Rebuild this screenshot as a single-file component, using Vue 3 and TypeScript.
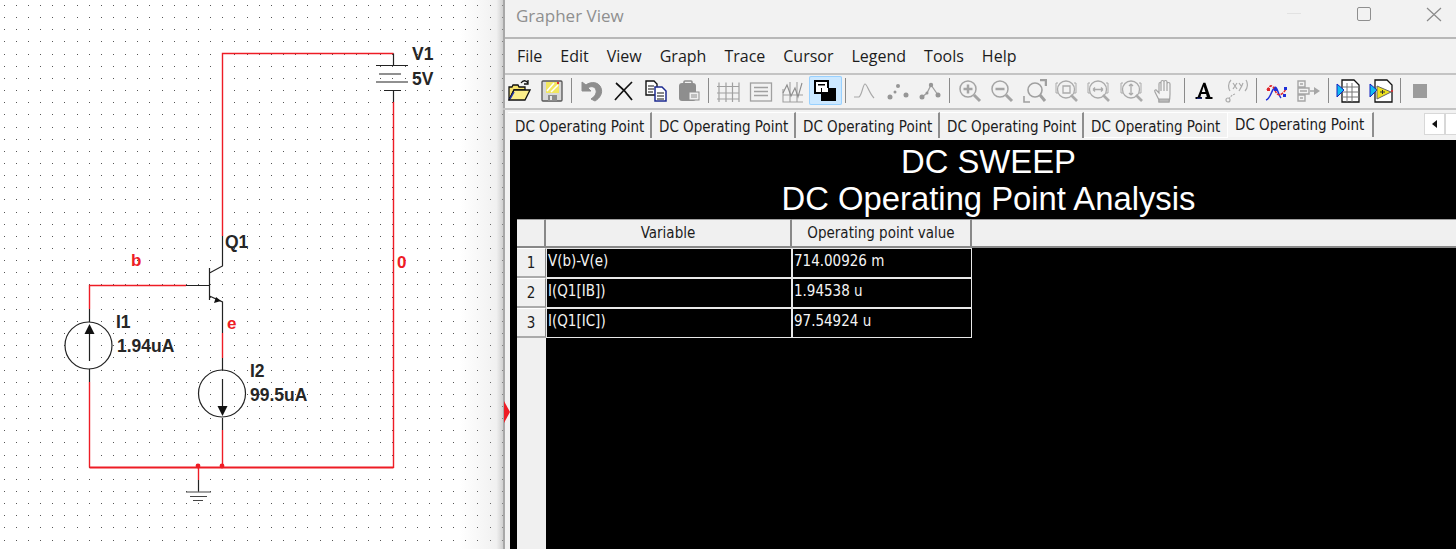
<script setup lang="ts">
const menus = ['File', 'Edit', 'View', 'Graph', 'Trace', 'Cursor', 'Legend', 'Tools', 'Help']
const tabs = Array.from({ length: 5 }, () => 'DC Operating Point')

interface Row {
  id: number
  name: string
  value: string
}

const rows: Row[] = [
  { id: 1, name: 'V(b)-V(e)', value: '714.00926 m' },
  { id: 2, name: 'I(Q1[IB])', value: '1.94538 u' },
  { id: 3, name: 'I(Q1[IC])', value: '97.54924 u' }
]

// the sheet's dot grid
let dotPath = ''
for (let i = 0; i < 45; i++) {
  for (let j = 0; j < 42; j++) {
    const x = Math.round(3.6 + 12.15 * j)
    const y = Math.round(5 + 12.15 * i)
    dotPath += `M${x} ${y}h1v1h-1z`
  }
}
</script>

<template>
  <div class="page">
    <!-- schematic sheet -->
    <div class="sheet">
      <svg class="circuit" width="503" height="549" viewBox="0 0 503 549">
        <path :d="dotPath" fill="#555" />
        <g fill="none" stroke="#ee1c25" stroke-width="1.4">
          <path d="M222.5 236V53.5H393.5" />
          <path d="M393.5 102V468" />
          <path d="M186 285.5H89.5V309" />
          <path d="M89.5 382V467.5" />
          <path d="M222.5 333V358" />
          <path d="M222.5 430V467.5" />
          <path d="M198.5 468V480" />
          <path d="M89.5 467.5H393.5" stroke-width="2" />
        </g>
        <circle cx="198" cy="466" r="2.4" fill="#ee1c25" />
        <circle cx="222" cy="466" r="2.4" fill="#ee1c25" />

        <g fill="none" stroke="#222" stroke-width="1.2">
          <path d="M393.5 53.5V65.5M376 65.5H408M379 74H401M376 82H408M384 90.5H401M393.5 90.5V102" />
          <path d="M222.5 236V266L209.5 273M209.5 268V300M186 285.5H209.5M209.5 296L222.5 302V333" />
          <path d="M222.5 358V370M222.5 418V430" />
          <path d="M89.5 309V322M89.5 369V382M89.5 361V333" />
          <path d="M222.5 379V408" />
          <path d="M198.5 480V491" />
          <circle cx="88.5" cy="345.5" r="23.5" />
          <circle cx="222" cy="393.5" r="23.5" />
          <path d="M186 492H211M190 496.5H207M193 500.5H203" stroke="#444" />
        </g>
        <path d="M89.5 324L94.5 334H84.5Z" fill="#111" />
        <path d="M222.5 416L217.5 406H227.5Z" fill="#111" />
        <path d="M221 301L214 303L216 297Z" fill="#111" />

        <g class="label">
          <text x="412" y="60">V1</text>
          <text x="412" y="85">5V</text>
          <text x="225" y="248">Q1</text>
          <text x="116" y="328">I1</text>
          <text x="117" y="352">1.94uA</text>
          <text x="250" y="377">I2</text>
          <text x="250" y="401">99.5uA</text>
        </g>
        <g class="label red">
          <text x="131" y="266">b</text>
          <text x="397" y="268">0</text>
          <text x="227" y="329">e</text>
        </g>
      </svg>
      <div class="shade"></div>
    </div>

    <!-- grapher window -->
    <div class="grapher">
      <div class="titlebar">
        <span class="title">Grapher View</span>
        <span class="min"></span>
        <span class="max"></span>
        <svg class="close" width="16" height="15" viewBox="0 0 16 15">
          <path d="M1 1L15 14M15 1L1 14" stroke="#8a8a8a" stroke-width="1.2" fill="none" />
        </svg>
      </div>

      <div class="menubar">
        <span v-for="m in menus" :key="m">{{ m }}</span>
      </div>

      <div class="toolbar">
        <button class="tool">
          <svg viewBox="0 0 24 24">
            <path d="M2 21V8H5L6 6H11L12 8H18V11H7L2 21Z" fill="#f7e36b" stroke="#111" stroke-width="1.3" />
            <path d="M2 21L7 11H23L18 21Z" fill="#fbee8a" stroke="#111" stroke-width="1.3" />
            <path d="M3 20L7 13" stroke="#2438b0" stroke-width="1.5" />
            <path d="M14 4C16 1 19 1 21 4M21 1V5H17" fill="none" stroke="#111" stroke-width="1.3" />
          </svg>
        </button>
        <button class="tool">
          <svg viewBox="0 0 24 24">
            <rect x="2" y="2" width="20" height="20" rx="1" fill="#d8d8d8" stroke="#555" stroke-width="1.3" />
            <rect x="6" y="3" width="13" height="11" fill="#f2e75f" />
            <path d="M7 12L14 4M11 13L18 6" stroke="#fff" stroke-width="1.5" />
            <rect x="17" y="3" width="2" height="2" fill="#e03030" />
            <rect x="8" y="16" width="9" height="6" fill="#8c8c8c" />
            <rect x="10" y="17" width="2" height="4" fill="#e8e8e8" />
          </svg>
        </button>
        <i class="sep"></i>
        <button class="tool">
          <svg viewBox="0 0 24 24">
            <path d="M3 3V12H12L9 9C11 7 16 7 17 11C18 15 15 18 12 20L16 22C21 19 24 14 22 9C20 3 12 2 7 6L3 3Z" fill="#8e8e8e" stroke="#8e8e8e" />
          </svg>
        </button>
        <button class="tool">
          <svg viewBox="0 0 24 24">
            <path d="M4 4C9 8 15 14 20 21M20 3C15 8 9 14 3 21" fill="none" stroke="#111" stroke-width="1.7" />
          </svg>
        </button>
        <button class="tool">
          <svg viewBox="0 0 24 24">
            <path d="M2 2H10L13 5V16H2Z" fill="#fff" stroke="#111" stroke-width="1.4" />
            <path d="M4 7H10M4 10H10M4 13H9" stroke="#111" />
            <path d="M11 8H18L22 12V22H11Z" fill="#fff" stroke="#1c2a90" stroke-width="1.5" />
            <path d="M13 14H20M13 17H20M13 20H20" stroke="#111" />
          </svg>
        </button>
        <button class="tool">
          <svg viewBox="0 0 24 24">
            <rect x="2" y="4" width="17" height="18" rx="3" fill="#8e8e8e" />
            <rect x="7" y="2" width="8" height="5" rx="1" fill="none" stroke="#8e8e8e" stroke-width="1.6" />
            <rect x="12" y="13" width="10" height="8" fill="#efefef" stroke="#8e8e8e" />
            <path d="M14 16H20M14 18H20" stroke="#8e8e8e" />
          </svg>
        </button>
        <i class="sep"></i>
        <button class="tool">
          <svg viewBox="0 0 24 24" fill="none" stroke="#a0a0a0" stroke-width="1.2">
            <path d="M3 3.5V23M10 3.5V23M16.5 3.5V23M23 3.5V23M1 7.5H23M1 14H23M1 20H23" />
          </svg>
        </button>
        <button class="tool">
          <svg viewBox="0 0 24 24" fill="none" stroke="#a0a0a0" stroke-width="1.3">
            <rect x="1.5" y="4" width="21" height="18" />
            <path d="M5 8.5H19M5 12.5H19M5 16.5H19" />
          </svg>
        </button>
        <button class="tool">
          <svg viewBox="0 0 24 24" fill="none" stroke="#a0a0a0" stroke-width="1.1">
            <path d="M2 10V23H22M9 3V23M16 3V23M2 16H22" />
            <path d="M2 14L6 6L10 17L14 9L17 18L21 4" stroke="#8c8c8c" />
          </svg>
        </button>
        <button class="tool active">
          <svg viewBox="0 0 24 24">
            <rect x="2" y="2" width="13" height="12" fill="#fff" stroke="#000" stroke-width="2" />
            <rect x="5" y="5" width="7" height="1.5" fill="#000" />
            <rect x="8" y="9" width="15" height="13" fill="#000" />
            <rect x="9" y="9" width="6" height="4" fill="#fff" />
          </svg>
        </button>
        <i class="sep"></i>
        <button class="tool">
          <svg viewBox="0 0 24 24" fill="none" stroke="#a8a8a8" stroke-width="1.2">
            <path d="M1 18H6C9 16 10 5 12 5C14 5 16 14 21 19" />
          </svg>
        </button>
        <button class="tool">
          <svg viewBox="0 0 24 24" fill="#969696">
            <circle cx="4" cy="18" r="2.5" />
            <circle cx="9" cy="13" r="1.5" />
            <circle cx="12" cy="7" r="2" />
            <circle cx="20" cy="16" r="2.5" />
          </svg>
        </button>
        <button class="tool">
          <svg viewBox="0 0 24 24">
            <path d="M4 18L9 14L13 6L20 16" fill="none" stroke="#a0a0a0" stroke-width="1.3" />
            <g fill="#969696">
              <circle cx="4" cy="18" r="2.5" />
              <circle cx="9" cy="14" r="1.5" />
              <circle cx="13" cy="6" r="2.2" />
              <circle cx="20" cy="16" r="2.5" />
            </g>
          </svg>
        </button>
        <i class="sep"></i>
        <button class="tool">
          <svg viewBox="0 0 24 24" fill="none" stroke="#a4a4a4" stroke-width="1.5">
            <circle cx="10" cy="10" r="8" />
            <path d="M5.5 10H14.5M10 5.5V14.5" stroke-width="2.5" />
            <path d="M16 16L22 22" stroke-width="3" />
          </svg>
        </button>
        <button class="tool">
          <svg viewBox="0 0 24 24" fill="none" stroke="#a4a4a4" stroke-width="1.5">
            <circle cx="10" cy="10" r="8" />
            <path d="M5.5 10H14.5" stroke-width="2.5" />
            <path d="M16 16L22 22" stroke-width="3" />
          </svg>
        </button>
        <button class="tool">
          <svg viewBox="0 0 24 24" fill="none" stroke="#a0a0a0" stroke-width="1.6">
            <circle cx="12" cy="11" r="7" />
            <path d="M17 16L22 22" stroke-width="3" />
            <path d="M1 17V23H7" />
            <path d="M17 1H23V7" stroke-width="2.5" />
          </svg>
        </button>
        <button v-for="mark in ['M8 7H15V14H8Z', 'M6 10.5H16M6 10.5L8 8.5M6 10.5L8 12.5M16 10.5L14 8.5M16 10.5L14 12.5', 'M11 5V16M11 5L9 7M11 5L13 7M11 16L9 14M11 16L13 14']" :key="mark" class="tool">
          <svg viewBox="0 0 24 24" fill="none" stroke="#aaa" stroke-width="1.3">
            <circle cx="11" cy="10.5" r="8.5" />
            <path :d="mark" />
            <path d="M3 14H1V4H3M19 14H21V4H19" stroke-width="1" />
            <path d="M16 16L22 22" stroke-width="2.6" />
          </svg>
        </button>
        <button class="tool">
          <svg viewBox="0 0 24 24" fill="#f4f4f4" stroke="#a4a4a4" stroke-width="1.2">
            <path d="M7 21L3 13C2 11 4 10 5 12L7 14V5C7 3 9 3 9 5V3C9 1 12 1 12 3V3C12 1 15 1 15 3V5C15 3 18 3 18 5V15C18 18 18 20 17 23H7Z" />
            <path d="M9 5V12M12 3V12M15 5V12" />
            <path d="M7 20H17V23H7Z" fill="#b8b8b8" />
          </svg>
        </button>
        <i class="sep"></i>
        <button class="tool">
          <svg class="letter" viewBox="0 0 24 24">
            <path d="M11 1H14L21 21H24V24H14V21H16L15 17H8L7 21H9V24H0V21H3L11 1Z M9 14H14L11.5 6Z" fill="#000" fill-rule="evenodd" />
            <path d="M2 23H9" stroke="#1c2a90" stroke-width="1.5" />
          </svg>
        </button>
        <button class="tool">
          <svg viewBox="0 0 24 24" fill="none" stroke="#aaa" stroke-width="1.2">
            <path d="M7 1C4 4 4 9 6 12M22 1C24 4 24 9 21 12M9 4L13 10M13 4L9 10M15 4L17.5 7.5L15 12M19 4L17.5 7.5" />
            <path d="M11 15C8 16 6 18 5 20" stroke-dasharray="2 1" />
            <circle cx="4" cy="21" r="2" />
          </svg>
        </button>
        <i class="sep"></i>
        <button class="tool">
          <svg viewBox="0 0 24 24" fill="none">
            <path d="M2 21C6 20 7 13 10 9C13 5 14 16 17 19" stroke="#1f2fd8" stroke-width="1.5" />
            <path d="M3 11C6 6 8 5 11 11C13 17 17 18 22 10" stroke="#e0262c" stroke-width="1.5" stroke-dasharray="3 1" />
            <rect x="3" y="9" width="3" height="3" fill="#e0262c" />
            <rect x="10" y="9" width="3" height="3" fill="#1f2fd8" />
            <rect x="20" y="8" width="3" height="3" fill="#1f2fd8" />
            <rect x="19" y="15" width="3" height="3" fill="#1f2fd8" />
          </svg>
        </button>
        <button class="tool">
          <svg viewBox="0 0 24 24" fill="none" stroke="#a6a6a6" stroke-width="1.4">
            <path d="M2 2H9V8H2ZM2 9H13V15H2ZM2 16H9V22H2ZM4 5H7M4 12H11M4 19H7M14 12H18" />
            <path d="M18 8L24 12L18 16Z" fill="#a6a6a6" stroke="none" />
          </svg>
        </button>
        <i class="sep"></i>
        <button class="tool">
          <svg viewBox="0 0 24 24">
            <path d="M6 1H18L23 6V23H6Z" fill="#fff" stroke="#111" stroke-width="1.3" />
            <path d="M6 8H23M6 13H23M6 18H23M11 4V23M16 4V23" stroke="#777" />
            <path d="M1 5L8 11L1 18Z" fill="#12bdf0" stroke="#1020c0" />
          </svg>
        </button>
        <button class="tool">
          <svg viewBox="0 0 24 24">
            <path d="M6 1H18L23 6V23H6Z" fill="#fff" stroke="#111" stroke-width="1.3" />
            <path d="M1 5L8 11L1 18Z" fill="#12bdf0" stroke="#1020c0" />
            <path d="M8 7L22 13L8 20Z" fill="#efe21a" stroke="#666" />
            <path d="M11 13H16M13.5 11V15" stroke="#333" />
            <path d="M22 12H24" stroke="#e0262c" stroke-width="1.5" />
          </svg>
        </button>
        <i class="sep"></i>
        <button class="tool">
          <svg viewBox="0 0 24 24"><rect x="5" y="5" width="14" height="14" fill="#9c9c9c" /></svg>
        </button>
      </div>

      <div class="tabbar">
        <div v-for="(t, i) in tabs" :key="i" class="tab" :class="{ last: i === 4 }">{{ t }}</div>
        <div class="tab current">DC Operating Point</div>
        <div class="scroller">
          <span class="scroll-btn"><i class="tri"></i></span>
          <span class="scroll-btn"></span>
        </div>
      </div>

      <div class="body">
        <i class="marker"></i>
        <div class="plot">
          <div class="heading">DC SWEEP</div>
          <div class="heading">DC Operating Point Analysis</div>
          <div class="table">
            <div class="corner"></div>
            <div class="col-head first">Variable</div>
            <div class="col-head second">Operating point value</div>
            <div class="head-rest"></div>
            <template v-for="r in rows" :key="r.id">
              <div class="row-head">{{ r.id }}</div>
              <div class="cell">{{ r.name }}</div>
              <div class="cell">{{ r.value }}</div>
              <div></div>
            </template>
            <div class="row-rest"></div>
          </div>
        </div>
      </div>
    </div>
  </div>
</template>

<style>
html,
body {
  margin: 0;
  overflow: hidden;
}
</style>

<style scoped>
.page {
  display: flex;
  width: 1456px;
  height: 552px;
  box-sizing: border-box;
  padding-bottom: 3px;
  overflow: hidden;
  background: #fff;
}

.sheet {
  position: relative;
  flex: 0 0 503px;
  background-color: #fff;
}

.circuit {
  position: absolute;
  left: 0;
  top: 0;
}

.label text {
  font-family: "Liberation Sans", Arial, sans-serif;
  font-size: 17.5px;
  font-weight: 700;
  fill: #262626;
}

.label.red text {
  font-size: 17px;
  fill: #ee1c25;
}

.shade {
  position: absolute;
  top: 0;
  bottom: 0;
  right: 0;
  width: 44px;
  background: linear-gradient(to right, rgba(190, 190, 190, 0), rgba(190, 190, 190, 0.22) 85%, rgba(170, 170, 170, 0.55));
}

.grapher {
  flex: 1;
  display: flex;
  flex-direction: column;
  min-width: 0;
  border-left: 2px solid #a8a8a8;
  background: #f2f2f2;
  font-family: "DejaVu Sans", "Noto Sans", sans-serif;
  color: #1c1c1c;
}

.titlebar {
  position: relative;
  flex: 0 0 39px;
  box-sizing: border-box;
  padding: 4px 0 0 11px;
  border-bottom: 2px solid #b8b8b8;
}

.title {
  font-family: "Open Sans", "Noto Sans", sans-serif;
  font-size: 17px;
  color: #8f8f8f;
}

.min {
  position: absolute;
  left: 782px;
  top: 13px;
  width: 14px;
  height: 1px;
  background: #e2e2e2;
}

.max {
  position: absolute;
  left: 852px;
  top: 7px;
  width: 12px;
  height: 12px;
  border: 1.5px solid #8f8f8f;
  border-radius: 2px;
}

.close {
  position: absolute;
  left: 921px;
  top: 7px;
}

.menubar {
  flex: 0 0 36px;
  box-sizing: border-box;
  display: flex;
  align-items: center;
  gap: 18px;
  padding: 0 0 1px 12px;
  border-bottom: 2px solid #c4c4c4;
  font-family: "Open Sans", "Noto Sans", sans-serif;
  font-size: 16px;
}

.toolbar {
  flex: 0 0 35px;
  box-sizing: border-box;
  display: flex;
  align-items: center;
  border-bottom: 2px solid #c4c4c4;
  margin-left: -2px;
  padding-bottom: 2px;
}

.tool {
  flex: 0 0 32.4px;
  height: 29px;
  padding: 0;
  display: flex;
  align-items: center;
  justify-content: center;
  border: none;
  background: none;
}

.tool svg {
  width: 24px;
  height: 24px;
}

.tool svg.letter {
  width: 18px;
  height: 17px;
}

.tool.active {
  background: #cce8ff;
  box-shadow: inset 0 0 0 1px #99d1ff;
  border-radius: 2px;
}

.sep {
  flex: 0 0 1px;
  height: 25px;
  margin: 0 3.2px;
  background: #8a8a8a;
}

.tabbar {
  position: relative;
  flex: 0 0 28px;
  display: flex;
  align-items: stretch;
  padding-left: 3px;
  padding-top: 2px;
  box-sizing: border-box;
}

.tab {
  width: 144px;
  box-sizing: border-box;
  padding: 5px 0 0 7px;
  font-size: 15px;
  line-height: 18px;
  font-stretch: condensed;
  white-space: nowrap;
  border-right: 2px solid #8e8e8e;
  border-top: 1px solid #fff;
}

.tab.last {
  border-right: 1px solid #fff;
  border-bottom: 1px solid #fff;
}

.tab.current {
  width: 146px;
  padding: 3px 0 0 7px;
  background: #f6f6f6;
  margin-bottom: 1px;
}

.scroller {
  position: absolute;
  left: 919px;
  top: 3px;
  display: flex;
}

.scroll-btn {
  display: flex;
  align-items: center;
  justify-content: center;
  width: 21px;
  height: 22px;
  box-sizing: border-box;
  background: #fff;
  border: 1px solid #d8d8d8;
}

.tri {
  border-style: solid;
  border-width: 4px 5px 4px 0;
  border-color: transparent #111 transparent transparent;
}

.body {
  position: relative;
  flex: 1;
  min-height: 0;
  padding: 2px 0 0 5px;
}

.marker {
  position: absolute;
  left: -1px;
  top: 263px;
  border-style: solid;
  border-width: 11px 0 11px 6px;
  border-color: transparent transparent transparent #ee1c25;
}

.plot {
  height: 100%;
  padding: 3px 0 0 7px;
  box-sizing: border-box;
  background: #000;
  overflow: hidden;
}

.heading {
  color: #fff;
  font-family: "Liberation Sans", Arial, sans-serif;
  font-size: 32.8px;
  line-height: 37px;
  height: 37px;
  padding-left: 4px;
  text-align: center;
}

.table {
  display: grid;
  grid-template-columns: 29px 246px 180px 1fr;
  grid-template-rows: 29px 30px 30px 30px 1fr;
  height: 332px;
  margin-top: 2px;
  font-size: 15px;
  line-height: 18px;
  font-stretch: condensed;
}

.corner,
.row-head,
.row-rest,
.col-head,
.head-rest {
  background: #f0f0f0;
  color: #1c1c1c;
}

.corner,
.col-head,
.head-rest {
  box-sizing: border-box;
  border-top: 1px solid #a0a0a0;
  border-bottom: 2px solid #888;
}

.corner,
.col-head {
  border-right: 2px solid #888;
}

.col-head {
  display: flex;
  align-items: center;
  justify-content: center;
}

.row-head {
  display: flex;
  align-items: center;
  justify-content: center;
  border-top: 1px solid #fff;
  border-right: 1px solid #888;
  border-bottom: 2px solid #aaa;
}

.cell {
  box-sizing: border-box;
  border: 1px solid #e8e8e8;
  color: #f4f4f4;
  padding: 3px 0 0 1px;
  white-space: nowrap;
}

.row-rest {
  grid-column: 1;
  min-height: 220px;
}
</style>
